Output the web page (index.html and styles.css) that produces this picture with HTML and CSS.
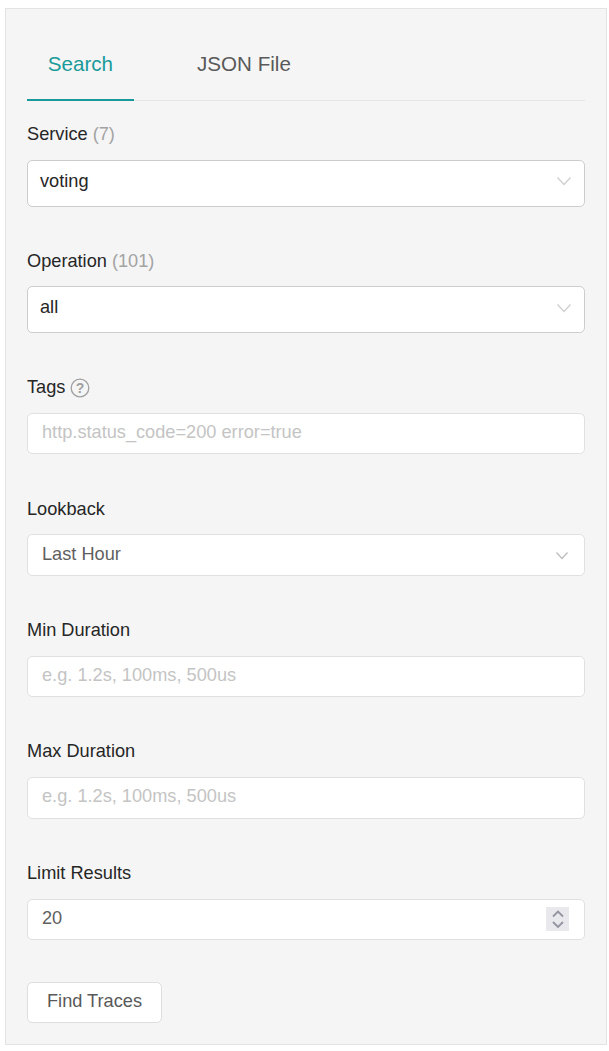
FILE: index.html
```html
<!DOCTYPE html>
<html lang="en">
<head>
    <meta charset="UTF-8">
    <meta name="viewport" content="width=device-width, initial-scale=1.0">
    <title>Search</title>
    <link rel="stylesheet" href="styles.css">
</head>
<body>
    <div class="search-panel">
        <div class="tabs">
            <div class="tab tab-active">Search</div>
            <div class="tab">JSON File</div>
        </div>

        <form class="search-form">
            <div class="form-item">
                <label class="form-label">Service <span class="count">(7)</span></label>
                <div class="field field-select">
                    <span class="select-value">voting</span>
                    <svg class="chevron-big" width="16" height="10" viewBox="0 0 16 10"><path d="M1.5 1.5 L8 8.5 L14.5 1.5" fill="none" stroke="#cfcfcf" stroke-width="1.3"/></svg>
                </div>
            </div>

            <div class="form-item">
                <label class="form-label">Operation <span class="count">(101)</span></label>
                <div class="field field-select">
                    <span class="select-value">all</span>
                    <svg class="chevron-big" width="16" height="10" viewBox="0 0 16 10"><path d="M1.5 1.5 L8 8.5 L14.5 1.5" fill="none" stroke="#cfcfcf" stroke-width="1.3"/></svg>
                </div>
            </div>

            <div class="form-item">
                <label class="form-label"><span>Tags</span><svg class="help-icon" width="20" height="20" viewBox="0 0 20 20">
                        <circle cx="10" cy="10" r="8.8" fill="none" stroke="#a0a0a0" stroke-width="1.3"/>
                        <text x="10" y="15" text-anchor="middle" class="help-mark">?</text>
                    </svg></label>
                <input class="field field-input" type="text" placeholder="http.status_code=200 error=true">
            </div>

            <div class="form-item">
                <label class="form-label">Lookback</label>
                <div class="field field-plain">
                    <span>Last Hour</span>
                    <svg class="chevron-small" width="14" height="9" viewBox="0 0 14 9"><path d="M1.5 1.5 L7 7.5 L12.5 1.5" fill="none" stroke="#bdbdbd" stroke-width="1.3"/></svg>
                </div>
            </div>

            <div class="form-item">
                <label class="form-label">Min Duration</label>
                <input class="field field-input" type="text" placeholder="e.g. 1.2s, 100ms, 500us">
            </div>

            <div class="form-item">
                <label class="form-label">Max Duration</label>
                <input class="field field-input" type="text" placeholder="e.g. 1.2s, 100ms, 500us">
            </div>

            <div class="form-item">
                <label class="form-label">Limit Results</label>
                <div class="field field-plain">
                    <span>20</span>
                    <div class="spinner">
                        <svg width="16" height="22" viewBox="0 0 16 22">
                            <path d="M3 8.5 L8 3.5 L13 8.5" fill="none" stroke="#9494a0" stroke-width="1.8"/>
                            <path d="M3 14 L8 19 L13 14" fill="none" stroke="#9494a0" stroke-width="1.8"/>
                        </svg>
                    </div>
                </div>
            </div>

            <button type="button" class="find-button">Find Traces</button>
        </form>
    </div>
</body>
</html>
```

FILE: styles.css
```css
body {
    margin: 0;
    padding: 8px 2px 6px 5px;
    background: #fff;
    font-family: 'Liberation Sans', Arial, sans-serif;
    font-size: 18.2px;
    color: #262626;
}

.search-panel {
    background: #f5f5f5;
    border: 1px solid #e3e3e3;
    padding: 0 21px 21px 21px;
}

.tabs {
    display: flex;
    gap: 42.4px;
    height: 91px;
    border-bottom: 1px solid #e6e6e6;
    margin-bottom: 20px;
}

.tab {
    padding: 42px 20.8px 0;
    font-size: 20.6px;
    line-height: 26px;
    color: #595959;
    box-sizing: border-box;
    height: 92px;
}

.tab-active {
    color: #199a9a;
    border-bottom: 2px solid #199a9a;
}

.form-item {
    margin-bottom: 40.85px;
}

.form-item:last-of-type {
    margin-bottom: 0;
}

.form-label {
    display: flex;
    align-items: center;
    height: 26px;
    padding-top: 0.3px;
    margin-bottom: 12.7px;
    line-height: 26px;
    white-space: pre;
}

.count {
    color: #a3a3a3;
}

.help-icon {
    display: block;
    margin: 2px 0 0 5px;
}

.help-mark {
    font-size: 14px;
    font-weight: bold;
    fill: #a0a0a0;
}

.field {
    display: flex;
    align-items: center;
    justify-content: space-between;
    box-sizing: border-box;
    width: 100%;
    background: #fff;
    border: 1px solid #e0e0e0;
    border-radius: 5.2px;
    font-family: inherit;
    font-size: 18.2px;
    height: 41.6px;
    padding: 0 15px 2px 14px;
    color: #5f5f5f;
    outline: none;
}

.field-select {
    height: 46.6px;
    border-color: #cccccc;
    padding: 0 12px 4px;
    color: #262626;
}

.field-input::placeholder {
    color: #c4c4c4;
    opacity: 1;
}

.chevron-small {
    margin-top: 2px;
}

.spinner {
    display: flex;
    align-items: center;
    justify-content: center;
    width: 23px;
    height: 24px;
    margin-top: 2px;
    background: #e8e8ed;
}

.find-button {
    display: block;
    box-sizing: border-box;
    width: 135px;
    height: 41px;
    margin-top: 42px;
    padding: 0 0 2px;
    background: #fff;
    border: 1px solid #dedede;
    border-radius: 5.2px;
    font-family: inherit;
    font-size: 18.2px;
    color: #595959;
}
```
